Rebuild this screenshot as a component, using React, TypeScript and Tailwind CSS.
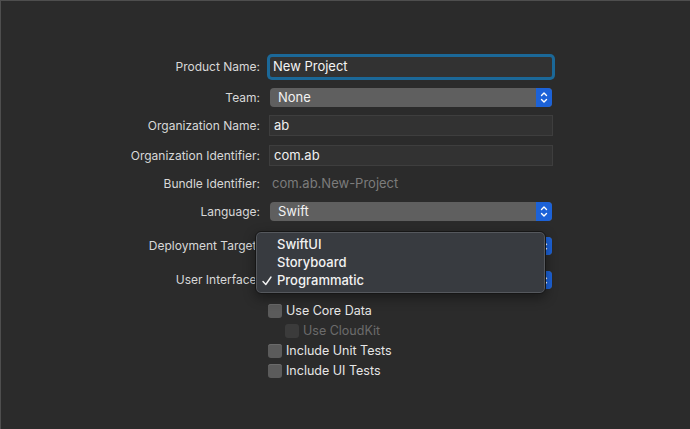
import React from 'react';

const font = { fontFamily: 'Inter, "Noto Sans", sans-serif' };

const Stepper: React.FC = () => (
  <div className="flex h-full w-[16px] items-center justify-center rounded-r-[4px] bg-[#1c62d8]">
    <svg width="8" height="13" viewBox="0 0 8 13" fill="none" stroke="#ffffff" strokeWidth="1.4" strokeLinecap="round" strokeLinejoin="round">
      <path d="M1.5 4.5 L4 2 L6.5 4.5" />
      <path d="M1.5 8.5 L4 11 L6.5 8.5" />
    </svg>
  </div>
);

const Popup: React.FC<{ value?: string }> = ({ value }) => (
  <div className="ml-[10px] flex h-full w-[282px] items-center rounded-[4px] bg-[#5f5f5f]">
    <span className="flex-1 pl-[8px] text-[13px] text-[#f2f2f2]">{value}</span>
    <Stepper />
  </div>
);

const Label: React.FC<{ children: React.ReactNode }> = ({ children }) => (
  <div className="w-[259px] shrink-0 text-right text-[12px] text-[#d8d8d8]">{children}</div>
);

const Field: React.FC<{ value: string }> = ({ value }) => (
  <div className="ml-[9px] flex h-[21px] w-[284px] items-center border border-[#3e3e3e] bg-[#323232] pl-[4px] text-[13px] text-[#f0f0f0]">
    {value}
  </div>
);

const Check: React.FC<{ label: string; disabled?: boolean; indent?: boolean }> = ({ label, disabled, indent }) => (
  <div className={`flex h-[20px] items-center ${indent ? 'ml-[284px]' : 'ml-[267px]'}`}>
    <div
      className={`h-[14px] w-[14px] rounded-[3px] ${
        disabled ? 'bg-[#3b3b3b]' : 'bg-[#5b5b5b] shadow-[inset_0_1px_0_#6a6a6a]'
      }`}
    />
    <span className={`ml-[4px] text-[12.5px] ${disabled ? 'text-[#6b6b6b]' : 'text-[#e6e6e6]'}`}>{label}</span>
  </div>
);

const App: React.FC = () => {
  return (
    <div
      className="relative h-[429px] w-[690px] overflow-hidden border-l border-t border-[#4e4e4e] bg-[#2b2b2b]"
      style={font}
    >
      <div className="flex flex-col pt-[53px]">
        <div className="flex h-[26px] items-center">
          <Label>Product Name:</Label>
          <div className="ml-[10px] flex h-[20px] w-[282px] items-center rounded-[2px] bg-[#323232] pl-[3px] text-[13px] text-[#f4f4f4] ring-[3px] ring-[#1b6898]">
            New Project
          </div>
        </div>
        <div className="mt-[8px] flex h-[19px] items-center">
          <Label>Team:</Label>
          <Popup value="None" />
        </div>
        <div className="mt-[8px] flex h-[21px] items-center">
          <Label>Organization Name:</Label>
          <Field value="ab" />
        </div>
        <div className="mt-[9px] flex h-[21px] items-center">
          <Label>Organization Identifier:</Label>
          <Field value="com.ab" />
        </div>
        <div className="mt-[8px] flex h-[20px] items-center">
          <Label>Bundle Identifier:</Label>
          <span className="ml-[12px] text-[13px] text-[#7c7c7c]">com.ab.New-Project</span>
        </div>
        <div className="mt-[8px] flex h-[19px] items-center">
          <Label>Language:</Label>
          <Popup value="Swift" />
        </div>
        <div className="mt-[16px] flex h-[18px] items-center">
          <Label>Deployment Target:</Label>
          <Popup />
        </div>
        <div className="mt-[16px] flex h-[18px] items-center">
          <Label>User Interface:</Label>
          <Popup />
        </div>
        <div className="mt-[12px] flex flex-col">
          <Check label="Use Core Data" />
          <Check label="Use CloudKit" disabled indent />
          <Check label="Include Unit Tests" />
          <Check label="Include UI Tests" />
        </div>
      </div>

      {/* popup menu over User Interface */}
      <div className="absolute left-[254px] top-[230px] flex h-[63px] w-[291px] flex-col justify-center rounded-[6px] border border-[#161616] bg-[#383b40] shadow-[inset_0_0_0_1px_#55585d,0_4px_12px_rgba(0,0,0,0.4)]">
        <div className="flex h-[18px] items-center pl-[21px] text-[13px] font-medium text-[#f2f2f2]">SwiftUI</div>
        <div className="flex h-[18px] items-center pl-[21px] text-[13px] font-medium text-[#f2f2f2]">Storyboard</div>
        <div className="flex h-[18px] items-center text-[13px] font-medium text-[#f2f2f2]">
          <span className="flex w-[21px] items-center pl-[6px]">
            <svg width="10" height="10" viewBox="0 0 10 10" fill="none" stroke="#f2f2f2" strokeWidth="1.4" strokeLinecap="round" strokeLinejoin="round">
              <path d="M1 5.5 L3.8 8.5 L9 1" />
            </svg>
          </span>
          Programmatic
        </div>
      </div>
    </div>
  );
};

export default App;
